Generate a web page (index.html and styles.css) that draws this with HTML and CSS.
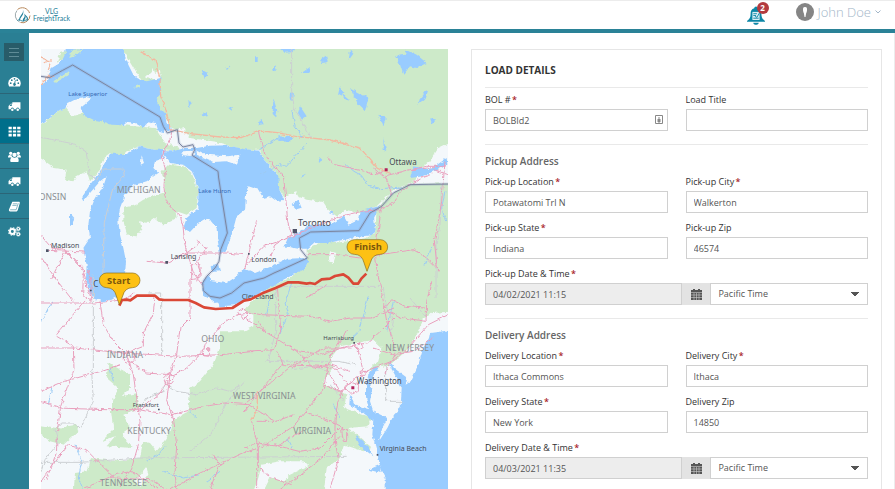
FILE: index.html
```html
<!DOCTYPE html>
<html lang="en">
<head>
<title>VLG FreightTrack - Load Details</title>
<meta name="viewport" content="width=device-width, initial-scale=1.0" />
<meta charset="utf-8" />
<link rel="stylesheet" href="styles.css">
</head>
<body>
<header class="topbar">
	<a class="logo" href="#">
		<svg class="logoMark" viewBox="0 0 34 34" aria-hidden="true">
			<path d="M7 5A15 15 0 0 1 31 12M32 17A15 15 0 0 1 13 31" fill="none" stroke="#b98a5e" stroke-width="2"/>
			<path d="M6 7A15 15 0 0 0 11 30" fill="none" stroke="#7c8c90" stroke-width="1.5"/>
			<path d="M17 4c3 6-1 9-4 14-3 4-4 8-2 11 0-5 3-7 5-11 3-4 4-9 1-14zM20 13c3 6 0 8-2 11-1 2 0 4 1 5 3-5 5-7 4-11 3 4 4 8 1 12 5-4 5-8 2-11-2-2-4-4-6-6z" fill="#23809a"/>
			<path d="M7 27c5-4 7 2 12 1s4-3 8-2" fill="none" stroke="#23809a" stroke-width="2"/>
		</svg>
		<span class="logoText">VLG<br>FreightTrack</span>
	</a>
	<div class="userArea">
		<button class="bell" type="button" aria-label="Notifications">
			<svg viewBox="0 0 20 20" aria-hidden="true">
				<path d="M10 0c1 0 2 1 2 2 3 1 4 3 4 6 0 4 1 6 4 8v1H0v-1c3-2 4-4 4-8 0-3 1-5 4-6 0-1 1-2 2-2zM7 18h6c0 3-6 3-6 0z" fill="#0c86a6"/>
				<path d="M6 6h8v9H6z" fill="#d8eef4"/>
				<path d="M7 8h4M7 10h3M7 13h6M9 11l2 1 3-5" stroke="#0c86a6" fill="none"/>
			</svg>
			<span class="badge">2</span>
		</button>
		<button class="userMenu" type="button">
			<svg class="avatar" viewBox="0 0 18 18" aria-hidden="true">
				<circle cx="9" cy="9" r="9" fill="#858585"/>
				<path d="M9 4c2 0 2 1 2 3 0 2-1 3-1 4l-.5 3h-1L8 11c0-1-1-2-1-4 0-2 0-3 2-3z" fill="#fff"/>
			</svg>
			<span>John Doe</span>
			<svg class="chevron" viewBox="0 0 6 4" aria-hidden="true"><path d="M.5.5l2.500 2.500 2.500-2.500" fill="none" stroke="#a3b6c8"/></svg>
		</button>
	</div>
</header>
<div class="page">
<nav class="sidebar">
	<button class="menuToggle" type="button" aria-label="Toggle menu"><svg viewBox="0 0 10 9" aria-hidden="true"><path d="M0 .5h10M0 4.500h10M0 8.500h10" stroke="#5e8c97"/></svg></button>
	<a class="navItem" href="#" aria-label="Dashboard"><svg viewBox="0 0 24 20"><path d="M2 19a11.500 11.500 0 1 1 20 0z" fill="#fff"/><g fill="#2a7f94"><circle cx="5" cy="13" r="1.600"/><circle cx="7" cy="7.500" r="1.600"/><circle cx="12" cy="5" r="1.600"/><circle cx="17" cy="7.500" r="1.600"/><circle cx="19" cy="13" r="1.600"/><path d="M13 7l1 .3-.6 6a2.500 2.500 0 1 1-1.800-.4z"/></g></svg></a>
	<a class="navItem" href="#" aria-label="Loads"><svg viewBox="0 0 24 20"><path d="M8 2h15v13h-2a3 3 0 0 0-6 0h-4a3 3 0 0 0-6 0H1V9l4-4h3zM3 9h4V6H5z" fill="#fff" fill-rule="evenodd"/><circle cx="8" cy="16" r="2.300" fill="#fff"/><circle cx="18" cy="16" r="2.300" fill="#fff"/></svg></a>
	<a class="navItem active" href="#" aria-label="Board"><svg viewBox="0 0 24 20"><path d="M1 1h6v5H1zM9 1h6v5H9zM17 1h6v5h-6zM1 8h6v4H1zM9 8h6v4H9zM17 8h6v4h-6zM1 14h6v5H1zM9 14h6v5H9zM17 14h6v5h-6z" fill="#fff"/></svg></a>
	<a class="navItem" href="#" aria-label="Users"><svg viewBox="0 0 24 20"><g fill="#fff"><circle cx="5" cy="4" r="3"/><circle cx="19" cy="4" r="3"/><circle cx="12" cy="7" r="4"/><path d="M0 12c0-3 1-5 3-5l4 1c0 3 1 4 2 4H0zM24 12c0-3-1-5-3-5l-4 1c0 3-1 4-2 4h9zM5 20c-2-3 0-8 3-9 3 2 5 2 8 0 3 1 5 6 3 9z"/></g></svg></a>
	<a class="navItem" href="#" aria-label="Carriers"><svg viewBox="0 0 24 20"><path d="M8 2h15v13h-2a3 3 0 0 0-6 0h-4a3 3 0 0 0-6 0H1V9l4-4h3zM3 9h4V6H5z" fill="#fff" fill-rule="evenodd"/><circle cx="8" cy="16" r="2.300" fill="#fff"/><circle cx="18" cy="16" r="2.300" fill="#fff"/></svg></a>
	<a class="navItem" href="#" aria-label="Records"><svg viewBox="0 0 24 20"><path d="M8 1h13l1 2-4 14-2 2H4c-2 0-3-2-2-4z" fill="#fff"/><path d="M9 5h8M8 8h8M4 16h11l4-12" stroke="#2a7f94" fill="none"/></svg></a>
	<a class="navItem" href="#" aria-label="Settings"><svg viewBox="0 0 24 20"><g fill="none" stroke="#fff"><circle cx="8" cy="10" r="4.500" stroke-width="3.500"/><circle cx="8" cy="10" r="7" stroke-width="2" stroke-dasharray="3 2.500"/><circle cx="19" cy="5" r="2.500" stroke-width="2"/><circle cx="19" cy="5" r="4" stroke-dasharray="2 1.500"/><circle cx="19" cy="15" r="2.500" stroke-width="2"/><circle cx="19" cy="15" r="4" stroke-dasharray="2 1.500"/></g></svg></a>
</nav>
<main class="content">
<section class="mapPanel">
<svg class="map" viewBox="3 3 1222 1320" preserveAspectRatio="xMinYMin slice" role="img" aria-label="Route map">
	<defs>
		<filter id="coast" x="0" y="0" width="1230" height="1330" filterUnits="userSpaceOnUse">
			<feTurbulence type="fractalNoise" baseFrequency="0.07" numOctaves="3" seed="4" result="n"/>
			<feDisplacementMap in="SourceGraphic" in2="n" scale="12" xChannelSelector="R" yChannelSelector="G"/>
		</filter>
	</defs>
	<rect class="land" x="0" y="0" width="1230" height="1330"/>
	<g filter="url(#coast)">
		<rect class="land" x="-20" y="-20" width="1270" height="1370"/>
		<!-- forest -->
		<g class="forest">
			<path d="M-20-20H1250V285L1227 285 1195 300 1170 340 1140 362 1125 400 1060 425 1010 475 960 495 915 485 890 505 865 485 850 462 800 455 760 440 735 452 715 420 712 380 675 335 657 305 612 305 530 282 450 270 440 255 395 240 360 180 300 90 240-10z"/>
			<path d="M-20 250L60 185 78 180 95 205 130 195 160 212 250 232 345 240 375 285 420 300 410 310 340 305 300 295 260 310 235 335 210 315 190 330 180 365 150 400 140 370 110 385 100 400 75 395 80 365 40 360 30 350-20 315z"/>
			<path d="M385 350L430 355 455 375 465 400 475 430 470 480 440 500 410 490 375 480 370 450 375 415 365 370z"/>
			<path d="M250 480L285 472 310 455 350 440 385 430 405 480 410 510 370 530 345 510 325 525 300 520 305 545 290 565 262 560 250 520z"/>
			<path d="M1250 405L1100 408 1040 450 1010 485 1005 555 980 570 900 583 850 580 800 605 800 650 750 690 700 712 650 745 612 790 640 800 640 835 612 850 540 850 540 900 520 950 480 1000 450 1020 445 1090 400 1115 380 1170 350 1210 330 1185 310 1180 300 1230 230 1240 150 1230 140 1270 105 1275 100 1340H850L860 1260 900 1230 912 1190 970 1210 997 1200 925 1140 985 1135 995 1110 940 1090 912 1080 920 1040 880 1020 847 1005 880 960 872 930 900 895 950 885 1000 875 1025 900 1015 940 980 970 1050 950 1110 900 1150 815 1175 795 1250 790z"/>
			<path d="M205 945L270 980 270 1020 245 1045 290 1035 300 1080 250 1100 270 1140 245 1160 278 1200 200 1195 225 1165 185 1180 220 1145 213 1090 220 1055 235 1020 200 990zM-10 1130L50 1140 110 1130 115 1150 70 1190 30 1180-10 1150z"/>
		</g>
		<g class="land">
			<path d="M315 90L335 70 340 60 345 75 360 65 362 95zM665 1250L720 1240 790 1240 805 1255 750 1280 730 1300 690 1290 670 1330H640L655 1290zM320 1255L325 1280 300 1315 285 1300zM870 610L890 615 880 645 865 640zM730 450L770 430 780 470 850 480 855 500 800 510 740 490z"/>
		</g>
		<!-- water -->
		<g class="water">
			<path d="M-20 120L20 100 35 60 60 45 70 20 80-20 240-20 250 3 255 25 265 50 280 80 300 95 320 100 340 95 365 88 358 120 365 135 350 150 360 180 375 195 380 225 395 240 390 255 370 255 352 250 345 225 325 220 310 240 285 225 262 222 250 232 215 230 180 218 160 215 130 200 122 180 150 155 145 145 110 152 85 165 75 182 60 185 20 215-20 250z"/>
			<path d="M365 305L372 330 345 340 340 360 355 375 320 400 285 410 265 430 255 440 240 480 235 520 240 560 250 600 258 640 255 680 250 710 240 740 215 755 185 760 160 750 145 720 138 690 140 650 130 600 150 570 145 530 150 490 165 450 190 415 200 385 180 400 150 435 130 460 125 450 150 410 180 370 210 317 260 318 300 295 340 305z"/>
			<path d="M365 310L400 310 430 300 470 300 510 293 560 292 612 303 657 308 675 335 690 355 715 385 718 425 733 455 710 460 690 445 670 450 655 425 625 415 618 440 615 485 590 505 575 560 560 605 540 618 532 570 530 540 505 510 470 530 450 552 430 540 440 510 475 480 475 430 465 390 455 370 430 350 390 345z"/>
			<path d="M487 740L487 700 505 680 515 700 560 705 590 685 612 660 645 675 690 657 740 632 802 630 805 642 790 665 730 695 700 715 650 740 612 760 585 772 540 775 520 760z"/>
			<path d="M732 595L740 575 760 560 812 530 870 530 912 505 925 530 957 515 962 490 1020 473 1012 490 1002 510 1007 545 997 562 942 568 912 575 862 585 822 585 802 602 775 602zM755 470L775 455 785 480 768 485zM512 655L535 650 540 670 515 672z"/>
			<path d="M1250 835L1220 848 1170 855 1167 870 1147 910 1132 960 1112 1000 1097 1010 1102 990 1062 960 1048 940 1060 975 1085 1020 1082 1080 1062 1100 1042 1140 1017 1180 1027 1140 1042 1110 1000 1090 990 1060 995 1030 990 1000 1015 960 1005 955 985 980 978 1010 978 1050 992 1100 1000 1115 997 1160 1010 1210 1022 1260 1037 1290 1037 1340H1250z"/>
			<path d="M930 1040L945 1070 995 1085 1000 1120 960 1090 928 1070zM985 1265L1020 1250 1025 1275zM945 1160L985 1195 1000 1225 960 1195zM1120 355L1170 365 1220 330 1222 350 1150 385 1110 390z"/>
			<path d="M710 -5H770L760 12 735 14zM1065 25L1095 20 1100 5 1130 20 1160 45 1130 60 1110 55 1090 80 1080 50zM930 120L985 150 975 190 955 170 945 150zM715 265L760 268 755 280 715 282zM900 130L930 155 910 150zM90 495L103 510 98 530 90 530z"/>
			<path d="M645 25h8v20h-8zM700 150l12 40-4 18-10-10zM750 130l12 10-5 20-8-12zM780 175l20 30-14 10-12-20zM785 75l25-18-5 18zM840 35l18-12 5 20-18 2zM900 115l14 18-20 8zM1015 200l25 10-10 22zM1140 150l15-20 10-5-10 30-20 15zM1170 210l20 5-14 12zM660 215l12 14-16 2zM1030 270l9 40-8-5zM485 65l18 10-8 20zM555 60l18-8-12 14zM485 200l14-8 8 12-18 4zM445 155l10 14-8 12zM565 180l14-6-4 14zM705 50l6 14-14 4zM930 5l10 12-14 20zM835 325l12 10-10 6zM865 495l10-4 8 10zM785 380l12-6-10 16z"/>
		</g>
		<g class="forest"><path d="M40 100L75 75 92 68 80 85 45 105zM280 118L300 110 300 118 285 122zM50 45L60 15 80 8 70 30zM88 30L95 5 130 3 105 25z"/></g>
		<g class="land"><path d="M470 305L500 320 560 325 600 320 590 350 560 340 520 342 470 320zM375 250L435 240 440 270 400 290 375 280zM415 270L430 290 415 295zM305 325L312 345 302 350zM155 450L185 415 190 410 165 455zM425 310L465 308 460 325 430 322zM1167 840L1250 805 1250 822 1190 845zM290 435L305 405 305 420z"/></g>
	</g>
	<g filter="url(#coast)">
		<!-- rivers -->
		<path class="river" d="M912 345l30 25 22 12 20 30 40 10 60-5M660 380l60-30 20 5 60-70M715 270l-60 35M755 185l10 50 25 35M105 1190l20 50-10 50 15 35M35 1020l-10 50M210 960l10 40M1215 430l-10 50 12 40M1175 600l-20 50M985 745l-25 100-30 30M755 705l-20 60 10 30-25 60M690 750l-10 50M320 1240l40-25 15-20M450 1090l20 20M880 1070l20 40M740 1170l15 30M5 820l20-40 15-20M1060 760l-20 90M370 1270l60 20 50-10M540 1270l-40 30"/>
		<!-- state lines -->
		<path class="stateLine" d="M3 268l100 20 35 20 10 70 25 20 15-35 60 0 5 20-35 40-25 100-5 170M755 3V130l8 50 50 90M325 735h40V920M155 970l5 90-30 60-5 20-30-15-30 0-20 20 10 40-40 50-20 60M3 1243h120L300 1230l620-5M160 970V680M380 1010l30 20 60 10 60-20 40 10 30-20M707 715V850l-20 80-10 10h220l50 10M705 715h320M1037 950v110h50M1030 720l10 60 20 40-10 50M1205 410l-5 120-12 60 0 160M755 965l60-10 40 10M300 1080l20-30 50-20 10-25M870 1010l40 45M1110 750l50 60M612 1000l-50 60-50 100-60 50"/>
		<!-- roads -->
		<path class="roadMinor" d="M3 30l30 10-10 30M10 45l25-10M300 10l45 25 15 60 2 50 15 40 15 60 60 12 90 10 60 2 60-20 50 5 60 12 100 10 90 25 50 60 40 15M632 1120l20-30 0-60M3 110l20-25 20 0"/>
		<path class="road" d="M396 245l-5 25-20 40-4 25 10 30-5 45 2 35 10 20 10 15 25 20 10 35 5 50 10 40 15 45 30 40M655 250l10 40 10 30 30 40 25 20 8 80 5 60 12 40-50 30-12 35M612 660l60-65 60-20 70-30 100-40 60-15 60-5 40-20 20-35 60-40 35-12M1000 360l30 25 80-20 50-10 60 0M865 330l20 20 90 20 30 10 25-10M1035 380l20 60M1215 340l-10 120-10 60-12 60 10 90M1225 380l-60-20-50 5M1025 475l-10 70-10 55 5 60 20 100 10 60 20 60 5 40-30 55M800 620l90 0 70 10 60-10 100-15 40 25 40 40M650 520l-20 80-15 60M440 615l120 0 50 5M320 640l60 5 60-30 40-30M25 607l110 5M5 565l30 35 40 5 55 60 10 50 15 40M130 660l-55-50-40 80M3 765l140 0 20 0 90-10 30-20M100 760l-55-70-40-60M50 860l90-110M3 900l100 0 150 15 170 10 120-5 100-10M50 865l50 30 2 70-40 110-8 60-5 80-30 80M180 760l10 70 30 50 40 40 20 60 10 70 10 70-5 70-20 70-40 60M3 1030l70-30 110-30 60-20M260 935l60 40 70 5M345 745l-5 50-30 60 0 40-50 20M450 690l0 120-30 30-10 80-20 60-10 80 20 50 10 80-5 90 10 80 25 50M380 990l60-30 50-50 5-20 50-60 50-30 30-5M55 1080l140 5 100 0 100 15 100-25 60-10 70 5 80 50M3 1060l60 20M3 1300l80-110 60 20 80 80 110 5 60 40M390 1325l90-50 130-60 60-20 90-60 90-110 20-100 40-60 10-20M135 1320l90-40 50-10 90 60M300 1085l60-50 25-40M612 790l50 10 150 5 60 15 60-10 60 0 70-30M612 805l70 50 80 50 80 15 80-25 60-10 50-45 30-30M612 910l90-5 20-60-10-130M710 910l20 40 120 5 40 10 30 40M612 1070l60-50 100-80M730 945l-50 60-70 90M655 820l20 30M800 750l60-40M1225 800l-60 30-60 70-50 40-80 30-60 45-20 40-10 60 0 60 10 60-25 90-30 80M1000 900l60 20 60-10 60-40M1035 780l20-25 40 20 60 5M1040 790l50 20 70 10M1175 700l-15 60-2 60M950 895l10 30 10 50M935 900l-80 0-60 30-40 30M910 1045l-50-80M760 900l60 60 50-10 60 20M850 1010l50 20 20-10M790 1090l60 20 60 30M612 1200l40-15 60 10 80-50M650 1120l60 0 50-20M635 1120l20 80 0 60 40 30 60 20M700 1190l80 20 60-10 60-60M720 1325l120-90 60-70M650 1260l0 60M470 700l10-30-10-30 30-40-30-20M520 1220l20 30-30 75"/>
		<path class="road" d="M250 925l10-15 20 5 5 20-15 15-20-10zM370 990l15-15 18 10-5 20-20 5zM595 790l15-10 15 20-15 15zM486 905l20-5 0 25-18-2zM915 1020l15-18 25 8 0 20-20 8zM905 1145l15 0 0 35-10 0zM960 970l15 0 0 12-12 0zM945 895l15-12 10 15-12 8zM455 650l25 0 0 40-25 5zM130 680l15-10 8 30 0 60-25-20z"/>
	</g>
	<!-- national border -->
	<path class="borderHalo" d="M3 85L28 89 68 67 98 51 360 207 370 235 382 255 412 245 417 285 429 297 459 290 464 305 456 322 534 370 536 390 562 555 542 605 537 640 525 660 500 685 488 705 490 728 510 745 540 750 575 735 612 705 672 690 702 675 732 662 802 630 782 605 778 570 812 552 957 548 990 495 1025 475 1060 435 1110 410 1230 408"/>
	<path class="border" d="M3 85L28 89 68 67 98 51 360 207 370 235 382 255 412 245 417 285 429 297 459 290 464 305 456 322 534 370 536 390 562 555 542 605 537 640 525 660 500 685 488 705 490 728 510 745 540 750 575 735 612 705 672 690 702 675 732 662 802 630 782 605 778 570 812 552 957 548 990 495 1025 475 1060 435 1110 410 1230 408"/>
	<!-- labels -->
	<g class="lakeLabel"><text x="85" y="144">Lake Superior</text><text x="475" y="436">Lake Huron</text></g>
	<g class="stateLabel"><text x="-4" y="456">ONSIN</text><text x="230" y="434">MICHIGAN</text><text x="484" y="881">OHIO</text><text x="200" y="930">INDIANA</text><text x="262" y="1157">KENTUCKY</text><text x="180" y="1314">TENNESSEE</text><text x="579" y="1054">WEST VIRGINIA</text><text x="760" y="1158">VIRGINIA</text><text x="1036" y="908">NEW JERSEY</text></g>
	<path class="dots" d="M18 604h8v8h-8zM376 639h8v8h-8zM150 725h5v5h-5zM624 615h5v5h-5zM758 543h13v13h-13zM940 882h5v5h-5zM354 1082h5v5h-5zM1010 1218h5v5h-5z"/>
	<path class="capital" d="M1034 361h9v9h-9zM934 1015h9v9h-9z"/>
	<g class="cityLabel"><text x="33" y="599">Madison</text><text x="392" y="633">Lansing</text><text x="634" y="643">London</text><text x="605" y="754">Cleveland</text><text x="1019" y="1209">Virginia Beach</text></g>
	<g class="cityLabel big"><text x="160" y="717">C</text><text x="1048" y="352">Ottawa</text><text x="950" y="1007">Washington</text></g>
	<text class="cityLabel huge" x="774" y="535">Toronto</text>
	<g class="cityLabel small"><text x="850" y="876">Harrisburg</text><text x="278" y="1076">Frankfort</text></g>
	<!-- route -->
	<path class="route" d="M238 773l8-17 15-1 10 2 20-14h54l12 11 15 2h73l22 9 25 13 35 5 50-3 35-22 20-4 35-18 40-16 38-17 30 0 25 4 10-2 15 3 20-14 25-2 15-8 25-5 15 10 15 18 14 0 10-15 15-15"/>
	<path class="marker" d="M200 675h78a21 21 0 0 1 0 44q-24 0-30 25l-10 26-9-26q-6-25-29-25a21 21 0 0 1 0-44z"/>
	<path class="marker" d="M943 575h78a21 21 0 0 1 0 44q-24 0-30 25l-10 26-9-26q-6-25-29-25a21 21 0 0 1 0-44z"/>
	<g class="markerLabel"><text x="236" y="708">Start</text><text x="984" y="607">Finish</text></g>
</svg>
</section>
<form class="card">
	<h1 class="cardTitle">Load Details</h1>
	<div class="grid">
		<div class="field">
			<label for="bol">BOL # <span class="req">*</span></label>
			<div class="inputWrap">
				<input id="bol" type="text" value="BOLBId2">
				<svg class="fillIcon" viewBox="0 0 8 9" aria-hidden="true"><path d="M.5.5h7v8h-7z" fill="#fff" stroke="#888"/><path d="M4 2v1M3 4h2v3H3z" stroke="#888" fill="#888"/></svg>
			</div>
		</div>
		<div class="field">
			<label for="title">Load Title</label>
			<input id="title" type="text">
		</div>
	</div>
	<h2 class="sectionTitle">Pickup Address</h2>
	<div class="grid">
		<div class="field">
			<label for="pLocation">Pick-up Location <span class="req">*</span></label>
			<input id="pLocation" type="text" value="Potawatomi Trl N">
		</div>
		<div class="field">
			<label for="pCity">Pick-up City <span class="req">*</span></label>
			<input id="pCity" type="text" value="Walkerton">
		</div>
		<div class="field">
			<label for="pState">Pick-up State <span class="req">*</span></label>
			<input id="pState" type="text" value="Indiana">
		</div>
		<div class="field">
			<label for="pZip">Pick-up Zip</label>
			<input id="pZip" type="text" value="46574">
		</div>
		<div class="field wide">
			<label for="pDate">Pick-up Date &amp; Time <span class="req">*</span></label>
			<div class="dateRow">
				<input id="pDate" type="text" value="04/02/2021 11:15" readonly>
				<button class="calendar" type="button" aria-label="Choose pick-up date"><svg viewBox="0 0 11 11"><path d="M0 1h11v10H0z" fill="#555"/><path d="M0 3.500h11M0 6h11M0 8.500h11M3 4v7M5.500 4v7M8 4v7" stroke="#ccc" stroke-width=".6"/><path d="M2 0h2v2H2zM7 0h2v2H7z" fill="#555"/></svg></button>
				<select aria-label="Pick-up time zone"><option>Pacific Time</option></select>
			</div>
		</div>
	</div>
	<h2 class="sectionTitle">Delivery Address</h2>
	<div class="grid">
		<div class="field">
			<label for="dLocation">Delivery Location <span class="req">*</span></label>
			<input id="dLocation" type="text" value="Ithaca Commons">
		</div>
		<div class="field">
			<label for="dCity">Delivery City <span class="req">*</span></label>
			<input id="dCity" type="text" value="Ithaca">
		</div>
		<div class="field">
			<label for="dState">Delivery State <span class="req">*</span></label>
			<input id="dState" type="text" value="New York">
		</div>
		<div class="field">
			<label for="dZip">Delivery Zip</label>
			<input id="dZip" type="text" value="14850">
		</div>
		<div class="field wide">
			<label for="dDate">Delivery Date &amp; Time <span class="req">*</span></label>
			<div class="dateRow">
				<input id="dDate" type="text" value="04/03/2021 11:35" readonly>
				<button class="calendar" type="button" aria-label="Choose delivery date"><svg viewBox="0 0 11 11"><path d="M0 1h11v10H0z" fill="#555"/><path d="M0 3.500h11M0 6h11M0 8.500h11M3 4v7M5.500 4v7M8 4v7" stroke="#ccc" stroke-width=".6"/><path d="M2 0h2v2H2zM7 0h2v2H7z" fill="#555"/></svg></button>
				<select aria-label="Delivery time zone"><option>Pacific Time</option></select>
			</div>
		</div>
	</div>
</form>
</main>
</div>
</body>
</html>
```

FILE: styles.css
```css
*{
	padding:0;
	margin:0;
	box-sizing:border-box;
}
body{
	height:100vh;
	display:flex;
	flex-direction:column;
	overflow:hidden;
	font-family:"Open Sans","Noto Sans",sans-serif;
	font-size:9px;
	line-height:14px;
	color:#333;
	background:#fff;
}
button{
	border:0;
	background:none;
	font:inherit;
	color:inherit;
}
svg{
	display:block;
}
.topbar{
	flex:none;
	height:33px;
	display:flex;
	justify-content:space-between;
	border-top:1px solid #ececec;
	border-bottom:4px solid #2a8297;
	padding:0 14px;
}
.logo{
	display:flex;
	align-items:center;
	gap:2px;
	color:#23809a;
	text-decoration:none;
}
.logoMark{
	width:17px;
	height:17px;
}
.logoText{
	font-family:Lato,sans-serif;
	font-size:7px;
	line-height:7px;
	text-align:center;
}
.userArea{
	display:flex;
	align-items:flex-start;
	gap:30px;
}
.bell{
	position:relative;
	width:20px;
	height:28px;
	padding:3px 1px;
}
.bell svg{
	width:18px;
	height:19px;
}
.badge{
	position:absolute;
	top:1px;
	right:-3px;
	width:12px;
	height:12px;
	border-radius:50%;
	background:#b23a3f;
	color:#fff;
	font-size:8px;
	font-weight:700;
	line-height:12px;
}
.userMenu{
	display:flex;
	align-items:center;
	gap:4px;
	height:22px;
	font-size:13px;
	font-weight:300;
	color:#a3b6c8;
}
.avatar{
	width:18px;
	height:18px;
}
.chevron{
	width:6px;
	height:4px;
}
.page{
	flex:1;
	min-height:0;
	display:flex;
	border-right:1px solid #ececec;
}
.sidebar{
	flex:none;
	width:29px;
	background:#2a7f94;
	display:flex;
	flex-direction:column;
}
.menuToggle{
	width:20px;
	height:18px;
	margin:10px 4px 8px;
	padding:4px 5px;
	background:#285c69;
}
.navItem{
	height:25px;
	border-bottom:1px solid #2b6577;
	display:flex;
	align-items:center;
	justify-content:center;
}
.navItem svg{
	width:13px;
	height:11px;
}
.navItem.active{
	background:#006f8b;
}
.navItem:last-child{
	border-bottom-color:transparent;
}
.content{
	flex:1;
	min-width:0;
	display:grid;
	grid-template-columns:minmax(0,407fr) minmax(0,411fr);
	gap:23px;
	padding:16px 12px 0;
}
.mapPanel{
	min-height:0;
	overflow:hidden;
}
.map{
	width:100%;
	height:100%;
	font-family:"Noto Sans","Open Sans",sans-serif;
}
.land{
	fill:#f4f8fb;
}
.forest{
	fill:#cdeac9;
}
.water{
	fill:#99ccff;
}
.river,.stateLine,.road,.roadMinor,.border,.borderHalo,.route{
	fill:none;
	stroke-linejoin:round;
}
.river{
	stroke:#9ccbf5;
	stroke-width:3;
}
.stateLine{
	stroke:#cccfd2;
	stroke-width:3;
}
.road{
	stroke:#e9a0bd;
	stroke-width:3;
}
.roadMinor{
	stroke:#f3b8a0;
	stroke-width:4;
}
.border{
	stroke:#7c86a0;
	stroke-width:3;
}
.borderHalo{
	stroke:#8894b8;
	stroke-opacity:.25;
	stroke-width:9;
}
.lakeLabel{
	font-size:18px;
	fill:#3468b4;
}
.stateLabel{
	font-size:26px;
	fill:#8a8f93;
}
.cityLabel{
	font-size:21px;
	fill:#474b55;
}
.cityLabel.big{
	font-size:24px;
}
.cityLabel.huge{
	font-size:27px;
}
.cityLabel.small{
	font-size:18px;
}
.dots{
	fill:#4f5468;
}
.capital{
	fill:#b3225b;
}
.route{
	stroke:#da4736;
	stroke-width:8;
}
.marker{
	fill:#fdc114;
	stroke:#8a6d1c;
	stroke-width:2;
}
.markerLabel{
	font-family:"Open Sans",sans-serif;
	font-size:28px;
	font-weight:700;
	text-anchor:middle;
	fill:#7a560c;
}
.card{
	min-width:0;
	border:1px solid #e6e6e6;
	border-bottom:0;
	padding:0 13px;
}
.cardTitle{
	font-size:10px;
	font-weight:700;
	line-height:14px;
	text-transform:uppercase;
	color:#333;
	padding:13px 0 10px;
	border-bottom:1px solid #e9e9e9;
	margin-bottom:5px;
}
.sectionTitle{
	font-size:10px;
	font-weight:600;
	line-height:14px;
	color:#666;
	margin-top:13px;
	margin-bottom:7px;
	padding-top:9px;
	border-top:1px solid #e9e9e9;
}
.grid{
	display:grid;
	grid-template-columns:1fr 1fr;
	gap:8px 18px;
}
.wide{
	grid-column:1 / 3;
}
.field{
	min-width:0;
}
.field label{
	display:block;
	margin-bottom:2px;
}
.req{
	color:#a9252b;
	font-weight:600;
	margin-left:-1px;
}
.field input,.field select{
	display:block;
	width:100%;
	height:22px;
	border:1px solid #d0d0d0;
	border-radius:0;
	background:#fff;
	padding:0 7px;
	font:inherit;
	color:#555;
}
.inputWrap{
	position:relative;
}
.fillIcon{
	position:absolute;
	top:6px;
	right:5px;
	width:8px;
	height:9px;
}
.dateRow{
	display:grid;
	grid-template-columns:minmax(0,198fr) 28px minmax(0,158fr);
}
.field .dateRow input{
	background:#ededed;
}
.calendar{
	background:#e3e3e3;
	display:flex;
	align-items:center;
	justify-content:center;
}
.calendar svg{
	width:11px;
	height:11px;
}
.field .dateRow select{
	appearance:none;
	background:conic-gradient(from -45deg at 50% 100%,#555 90deg,transparent 0) right 8px center / 8px 4px no-repeat,#fff;
}
```
